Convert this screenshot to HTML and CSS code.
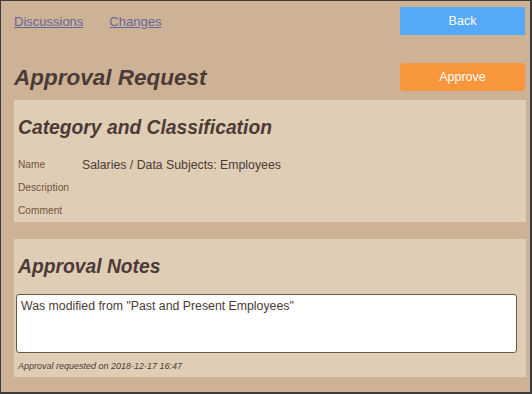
FILE: index.html
```html
<!DOCTYPE html>
<html lang="en">
<head>
    <meta charset="UTF-8">
    <meta name="viewport" content="width=device-width, initial-scale=1.0">
    <title>Approval Request</title>
    <link rel="stylesheet" href="styles.css">
</head>
<body>
    <div class="frame">
        <div class="topbar">
            <nav class="tabs">
                <a href="#">Discussions</a>
                <a href="#">Changes</a>
            </nav>
            <button class="btn btn-back">Back</button>
        </div>

        <div class="title-row">
            <h1>Approval Request</h1>
            <button class="btn btn-approve">Approve</button>
        </div>

        <section class="panel">
            <h2>Category and Classification</h2>
            <div class="fields">
                <span class="label">Name</span>
                <span class="value">Salaries / Data Subjects: Employees</span>
                <span class="label">Description</span>
                <span class="value"></span>
                <span class="label">Comment</span>
                <span class="value"></span>
            </div>
        </section>

        <section class="panel notes">
            <h2>Approval Notes</h2>
            <textarea class="note-box">Was modified from "Past and Present Employees"</textarea>
            <p class="stamp">Approval requested on 2018-12-17 16:47</p>
        </section>
    </div>
</body>
</html>
```

FILE: styles.css
```css
/* General Styles */
body {
    margin: 0;
    font-family: "Liberation Sans", Arial, sans-serif;
    color: #4b3b37;
}

/* Outer frame */
.frame {
    width: 532px;
    height: 394px;
    box-sizing: border-box;
    background: #ceb296;
    border: 1px solid #3d3d3d;
    border-right-width: 2px;
    border-bottom-width: 2px;
    padding: 6px 4px 0 13px;
}

/* Top bar */
.topbar {
    display: flex;
    justify-content: space-between;
    align-items: center;
    height: 28px;
}

.tabs {
    display: flex;
    gap: 26px;
}

.tabs a {
    font-size: 13px;
    color: #67679b;
}

/* Buttons */
.btn {
    width: 125px;
    height: 28px;
    margin-right: 1px;
    border: none;
    color: #fff;
    font-family: "Liberation Sans", Arial, sans-serif;
    font-size: 12.5px;
    cursor: pointer;
}

.btn-back {
    background: #56a9f6;
}

.btn-approve {
    background: #f7963a;
    border-radius: 3px;
}

/* Title */
.title-row {
    display: flex;
    justify-content: space-between;
    align-items: center;
    margin-top: 28px;
    height: 28px;
}

h1 {
    margin: 0;
    padding-top: 2px;
    font-size: 22.5px;
    font-style: italic;
    line-height: 28px;
}

/* Panels */
.panel {
    background: #e0cdb5;
    margin-top: 9px;
    padding: 16px 4px 0 4px;
}

h2 {
    margin: 0 0 14px;
    font-size: 19.3px;
    font-style: italic;
    line-height: 23px;
}

.fields {
    display: grid;
    grid-template-columns: 64px 1fr;
    grid-auto-rows: 23px;
    line-height: 24px;
}

.label {
    font-size: 10.2px;
    color: #6e5540;
}

.value {
    font-size: 12.3px;
}

/* Notes */
.notes {
    margin-top: 17px;
    padding: 16px 9px 5px 2px;
}

.notes h2 {
    margin: 0 0 16px 2px;
}

.note-box {
    display: block;
    width: 100%;
    height: 59px;
    box-sizing: border-box;
    padding: 4px;
    border: 1px solid #6c5842;
    border-radius: 3px;
    background: #fff;
    font-family: "Liberation Sans", Arial, sans-serif;
    font-size: 12.3px;
    color: #4b3b37;
    resize: none;
}

.stamp {
    margin: 7px 0 0 2px;
    font-size: 9px;
    font-style: italic;
    line-height: 12px;
}
```
